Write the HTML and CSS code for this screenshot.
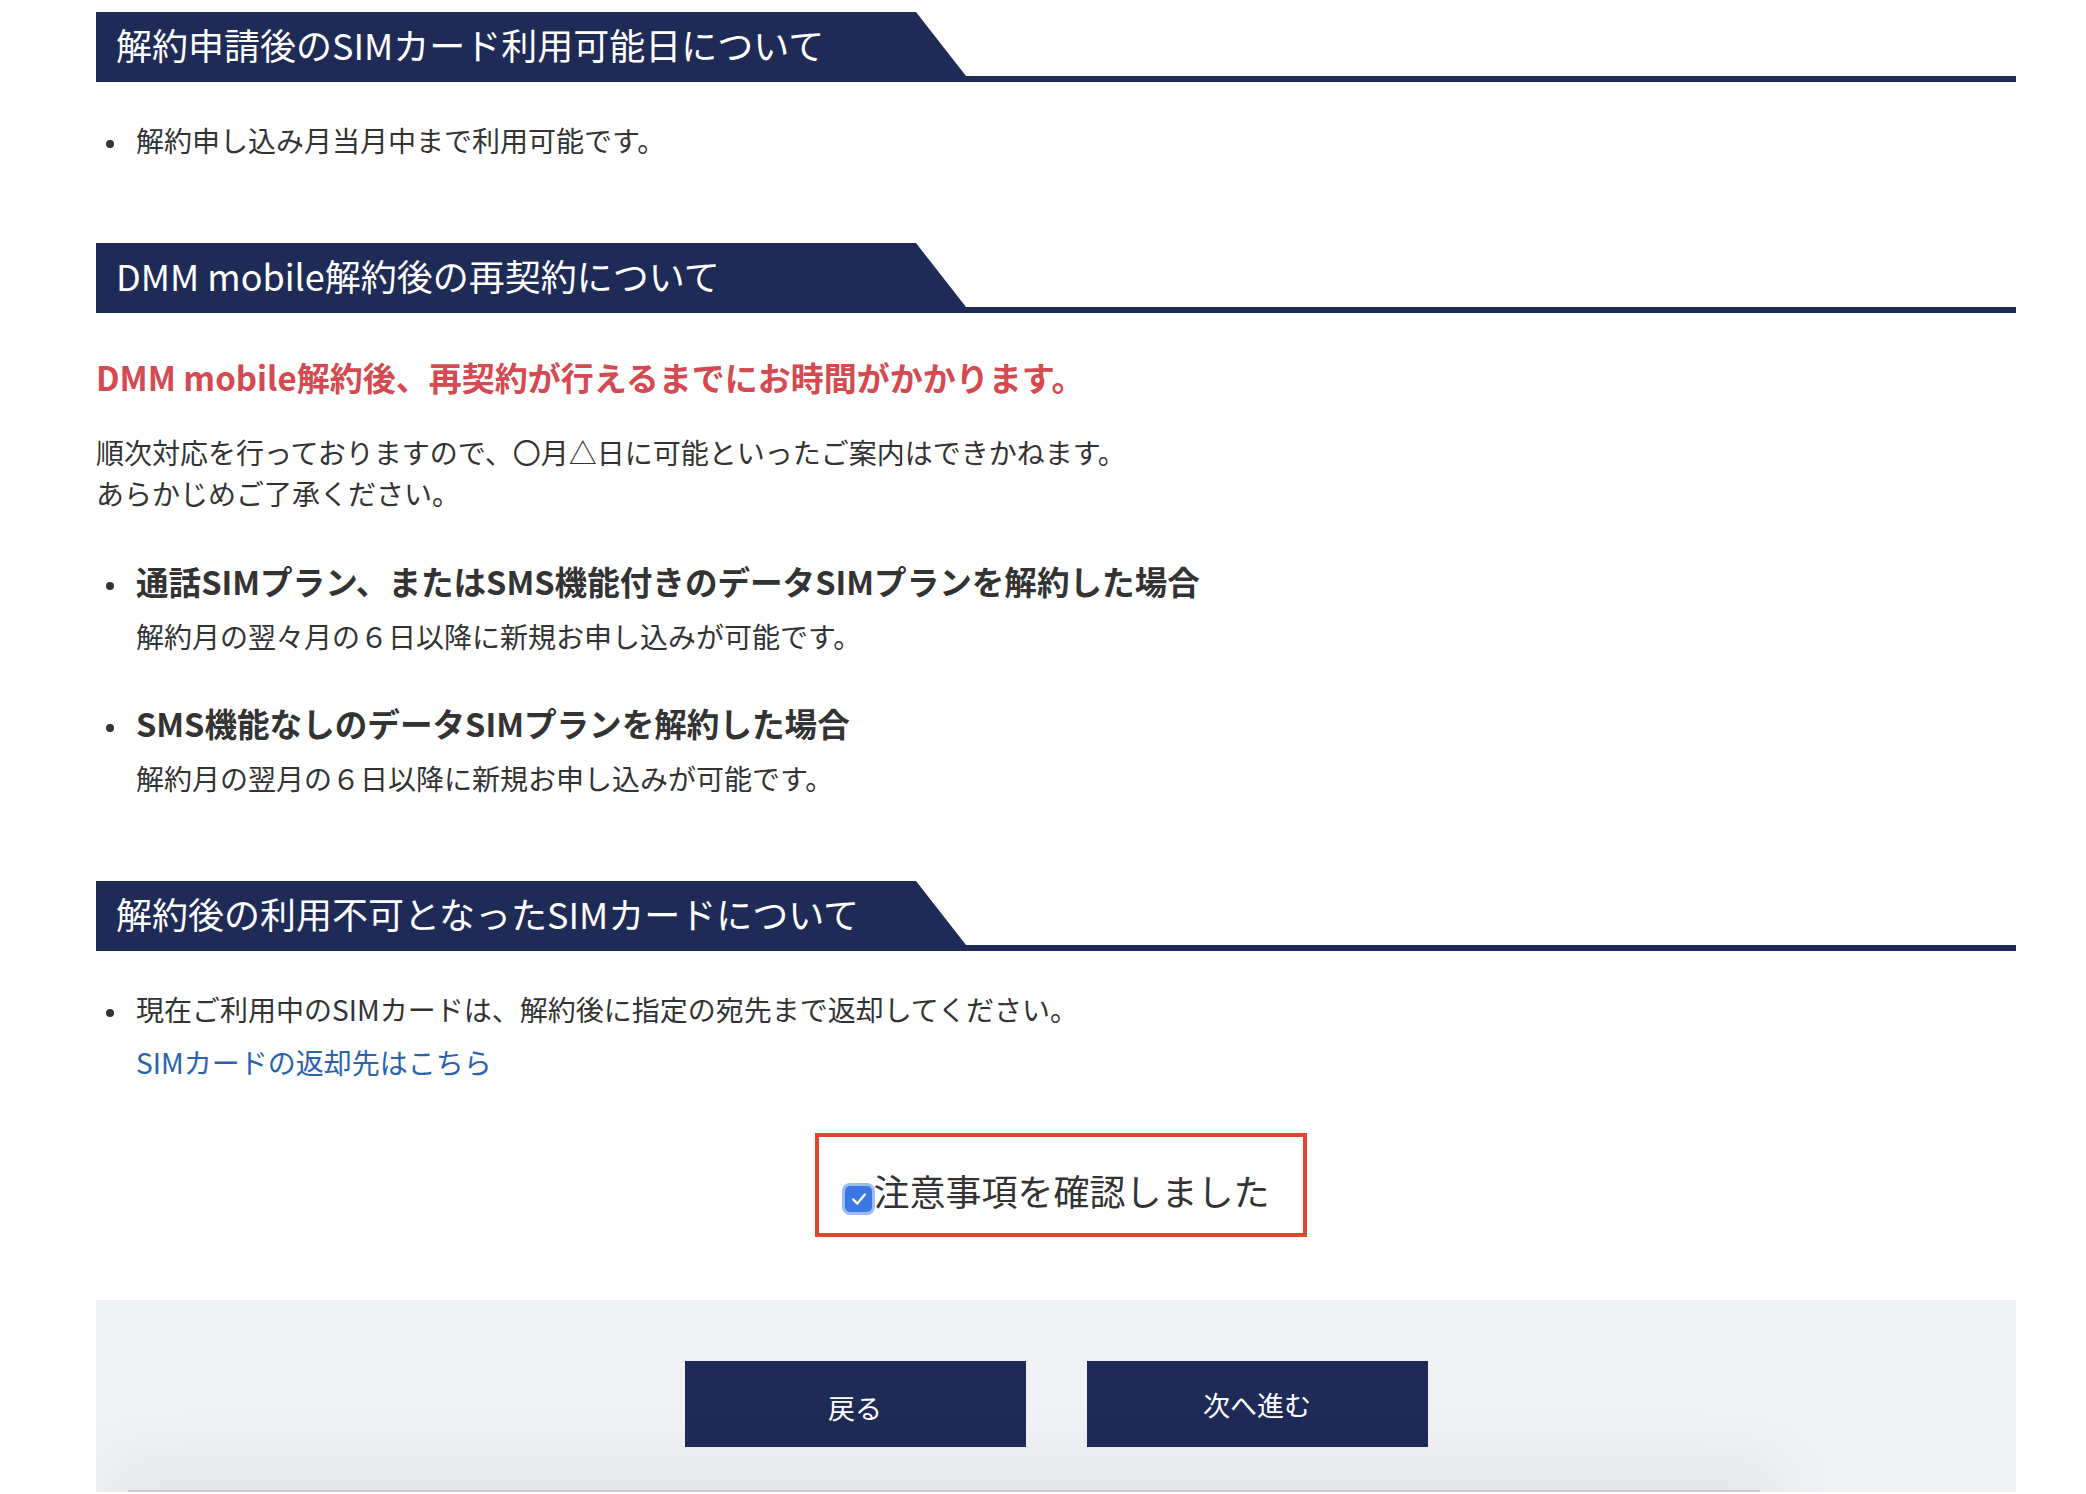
FILE: index.html
```html
<!DOCTYPE html>
<html lang="ja">
<head>
<meta charset="utf-8">
<title>解約申請</title>
<link rel="stylesheet" href="styles.css">
</head>
<body>
<main class="page">
  <section class="section first">
    <h2 class="heading"><span class="heading-tab">解約申請後のSIMカード利用可能日について</span></h2>
    <ul class="list">
      <li class="item"><span class="dot"></span>解約申し込み月当月中まで利用可能です。</li>
    </ul>
  </section>

  <section class="section">
    <h2 class="heading"><span class="heading-tab">DMM mobile解約後の再契約について</span></h2>
    <p class="alert">DMM mobile解約後、再契約が行えるまでにお時間がかかります。</p>
    <p class="para">順次対応を行っておりますので、〇月△日に可能といったご案内はできかねます。<br>あらかじめご了承ください。</p>
    <ul class="plans">
      <li class="plan">
        <div class="plan-title"><span class="dot"></span>通話SIMプラン、またはSMS機能付きのデータSIMプランを解約した場合</div>
        <div class="plan-desc">解約月の翌々月の６日以降に新規お申し込みが可能です。</div>
      </li>
      <li class="plan">
        <div class="plan-title"><span class="dot"></span>SMS機能なしのデータSIMプランを解約した場合</div>
        <div class="plan-desc">解約月の翌月の６日以降に新規お申し込みが可能です。</div>
      </li>
    </ul>
  </section>

  <section class="section">
    <h2 class="heading"><span class="heading-tab">解約後の利用不可となったSIMカードについて</span></h2>
    <ul class="list">
      <li class="item"><span class="dot"></span>現在ご利用中のSIMカードは、解約後に指定の宛先まで返却してください。</li>
    </ul>
    <a class="link" href="#">SIMカードの返却先はこちら</a>
  </section>

  <div class="confirm-wrap">
    <label class="confirm">
      <span class="check"><svg viewBox="0 0 24 24" width="20" height="20"><polyline points="5,12.5 10,17.5 19,6.5" fill="none" stroke="#ffffff" stroke-width="2.8" stroke-linecap="round" stroke-linejoin="round"/></svg></span>
      <span class="confirm-text">注意事項を確認しました</span>
    </label>
  </div>

  <div class="panel">
    <div class="buttons">
      <a class="btn btn-back" href="#">戻る</a>
      <a class="btn btn-next" href="#">次へ進む</a>
    </div>
    <div class="footer-shadow"></div>
  </div>
</main>
</body>
</html>
```
FILE: styles.css
```css
html, body {
  margin: 0;
  padding: 0;
  background: #ffffff;
}
body {
  font-family: "Noto Sans CJK JP", "Noto Sans", sans-serif;
  color: #333333;
  overflow: hidden;
}
.page {
  width: 1920px;
  margin-left: 96px;
  padding-top: 12px;
}
.section + .section {
  margin-top: 82px;
}
.heading {
  margin: 0;
  height: 70px;
  background: linear-gradient(to top, #1f2b57 6px, transparent 6px);
  font-weight: 400;
}
.heading-tab {
  display: block;
  width: 880px;
  height: 70px;
  box-sizing: border-box;
  padding-left: 20px;
  background: #1f2b57;
  color: #ffffff;
  font-size: 36px;
  line-height: 65px;
  white-space: nowrap;
  clip-path: polygon(0 0, 820px 0, 870px 64px, 880px 64px, 880px 100%, 0 100%);
}
.list {
  list-style: none;
  margin: 38px 0 0;
  padding: 0 0 0 40px;
}
.item {
  font-size: 28px;
  line-height: 41px;
  white-space: nowrap;
}
.dot {
  display: inline-block;
  width: 8px;
  height: 8px;
  border-radius: 50%;
  background: #333333;
  margin-left: -30px;
  margin-right: 22px;
  vertical-align: middle;
}
.alert {
  margin: 40px 0 0;
  color: #d44a50;
  font-size: 33px;
  font-weight: 700;
  line-height: 48px;
  white-space: nowrap;
}
.para {
  margin: 31px 0 0;
  font-size: 28px;
  line-height: 41px;
  white-space: nowrap;
}
.plans {
  list-style: none;
  margin: 43px 0 0;
  padding: 0 0 0 40px;
}
.plan + .plan {
  margin-top: 42px;
}
.plan-title {
  font-size: 32.6px;
  font-weight: 700;
  line-height: 48px;
  white-space: nowrap;
}
.plan-desc {
  margin-top: 11px;
  font-size: 28px;
  line-height: 41px;
  white-space: nowrap;
}
.link {
  display: block;
  margin: 12px 0 0 40px;
  color: #2a62b0;
  font-size: 28px;
  line-height: 41px;
  text-decoration: none;
}
.confirm-wrap {
  display: flex;
  justify-content: center;
  padding-left: 10px;
  margin-top: 50px;
}
.confirm {
  display: flex;
  align-items: flex-start;
  border: 4px solid #e2452c;
  padding: 26px 33px 16px 24px;
  cursor: pointer;
}
.check {
  display: flex;
  align-items: center;
  justify-content: center;
  width: 27px;
  height: 26px;
  margin: 23px 1px 0 2px;
  border-radius: 5px;
  background: #3b78e4;
  box-shadow: 0 0 0 3px #9dbcf2;
}
.confirm-text {
  font-size: 36px;
  line-height: 54px;
  color: #333333;
  white-space: nowrap;
}
.panel {
  position: relative;
  margin-top: 63px;
  height: 192px;
  padding-top: 61px;
  box-sizing: border-box;
  background: #f0f1f5;
  overflow: hidden;
}
.buttons {
  display: flex;
  justify-content: center;
  gap: 61px;
}
.btn {
  display: flex;
  align-items: center;
  justify-content: center;
  width: 341px;
  height: 86px;
  background: #1f2b57;
  color: #ffffff;
  font-size: 27px;
  text-decoration: none;
}
.btn-back {
  padding-top: 6px;
  box-sizing: border-box;
}
.footer-shadow {
  position: absolute;
  left: 32px;
  width: 1632px;
  top: 190px;
  height: 10px;
  background: #c9c9ce;
  box-shadow: 0 0 70px 20px rgba(0, 0, 0, 0.08);
}
```
